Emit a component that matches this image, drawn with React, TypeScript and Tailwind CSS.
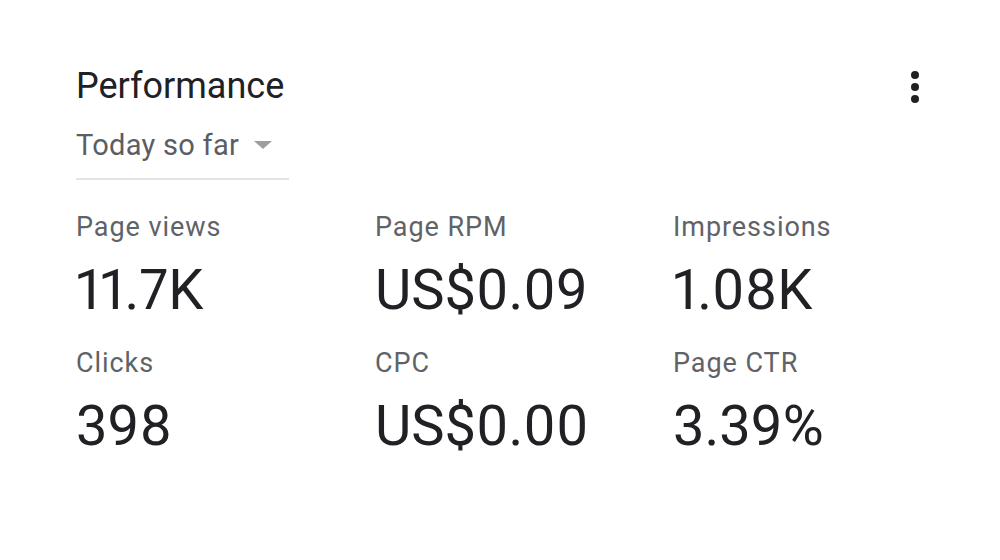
import React from "react";

const METRICS = [
  { label: "Page views", value: "11.7K" },
  { label: "Page RPM", value: "US$0.09" },
  { label: "Impressions", value: "1.08K" },
  { label: "Clicks", value: "398" },
  { label: "CPC", value: "US$0.00" },
  { label: "Page CTR", value: "3.39%" },
];

function MoreIcon() {
  return (
    <svg width="8" height="32" viewBox="0 0 8 32" className="mt-[2px]">
      <circle cx="4" cy="4" r="4" fill="#202124" />
      <circle cx="4" cy="16" r="4" fill="#202124" />
      <circle cx="4" cy="28" r="4" fill="#202124" />
    </svg>
  );
}

export default function App() {
  return (
    <div
      className="w-[1000px] h-[560px] bg-white pl-[76px] pr-[81px] pt-[64px]"
      style={{ fontFamily: "Roboto, 'Liberation Sans', sans-serif" }}
    >
      {/* HEADER */}
      <div className="flex items-center justify-between">
        <h2 className="text-[36px] leading-[44px] text-[#202124] font-normal">Performance</h2>
        <MoreIcon />
      </div>

      {/* DATE RANGE DROPDOWN */}
      <div className="mt-[19px] w-[213px] border-b-2 border-[#e3e3e3] pb-[15px]">
        <div className="flex items-center">
          <span className="text-[29px] leading-[36px] text-[#5a5e63] tracking-[0.01em]">Today so far</span>
          <svg width="18" height="8" viewBox="0 0 18 8" className="ml-[15px]">
            <path d="M0 0 L18 0 L9 8 Z" fill="#9e9e9e" />
          </svg>
        </div>
      </div>

      {/* METRICS GRID */}
      <div className="mt-[31px] grid grid-cols-[299px_298px_1fr] gap-y-[25px]">
        {METRICS.map((m) => (
          <div key={m.label} className="flex flex-col">
            <span className="text-[27px] leading-[32px] text-[#5f6368] tracking-[0.035em]">{m.label}</span>
            <span className="mt-[15px] text-[56px] leading-[64px] text-[#202124] proportional-nums">
              {m.value}
            </span>
          </div>
        ))}
      </div>
    </div>
  );
}
